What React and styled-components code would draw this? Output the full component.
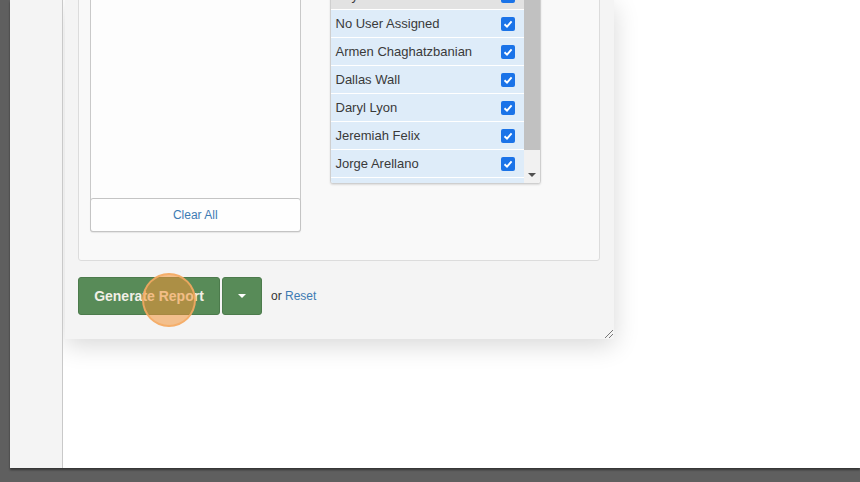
import React from "react";
import styled, { createGlobalStyle } from "styled-components";

const GlobalStyle = createGlobalStyle`
  html, body {
    margin: 0;
    padding: 0;
    background: #5f5f5f;
    font-family: "Liberation Sans", Arial, sans-serif;
  }
  * { box-sizing: border-box; }
`;

const Screen = styled.div`
  width: 860px;
  height: 482px;
  overflow: hidden;
  background: #5f5f5f;
  padding: 0 0 14px 10px;
`;

const Page = styled.div`
  height: 468px;
  display: flex;
  background: #fff;
  box-shadow: 0 2px 2px rgba(0, 0, 0, 0.45);
`;

const Sidebar = styled.aside`
  width: 53px;
  flex-shrink: 0;
  background: #f4f4f4;
  border-right: 1px solid #c9c9c9;
`;

const Main = styled.main`
  flex: 1;
  padding-left: 2px;
  overflow: hidden;
`;

const Dialog = styled.section`
  position: relative;
  width: 549px;
  height: 339px;
  background: #f4f4f4;
  box-shadow: 0 6px 24px rgba(0, 0, 0, 0.16);
  padding: 0 14px 0 13px;
  display: flex;
  flex-direction: column;
`;

const Fieldset = styled.div`
  margin-top: -30px;
  height: 291px;
  border: 1px solid #dcdcdc;
  border-radius: 3px;
  background: #f9f9f9;
  padding: 9px 58px 0 11px;
  display: flex;
  align-items: flex-start;
  gap: 29px;
`;

const LeftList = styled.div`
  width: 211px;
  height: 252px;
  border: 1px solid #c9c9c9;
  border-radius: 3px;
  background: #fdfdfd;
  display: flex;
  flex-direction: column;
  justify-content: flex-end;
`;

const ClearButton = styled.button`
  margin: 0 -1px -1px;
  height: 34px;
  border: 1px solid #c4c4c4;
  border-radius: 3px;
  background: #fefefe;
  box-shadow: 0 1px 1px rgba(0, 0, 0, 0.08);
  color: #3d7bb3;
  font-family: inherit;
  font-size: 12px;
`;

const RightList = styled.div`
  margin-top: 1px;
  width: 212px;
  height: 203px;
  border: 1px solid #cfcfcf;
  border-radius: 3px;
  background: #fff;
  box-shadow: 0 1px 2px rgba(0, 0, 0, 0.12);
  display: flex;
  overflow: hidden;
`;

const Rows = styled.ul`
  flex: 1;
  margin: 0;
  padding: 0;
  list-style: none;
`;

const Row = styled.li`
  height: 28px;
  border-bottom: 1px solid #fff;
  background: ${(p) => (p.hover ? "#e2e2e2" : "#deecf9")};
  display: flex;
  align-items: center;
  justify-content: space-between;
  padding: 0 9px 0 5px;
  font-size: 13px;
  color: #3a3a3a;
`;

const Check = styled.span`
  width: 14px;
  height: 14px;
  border-radius: 2px;
  background: #1a73e8;
  display: flex;
  align-items: center;
  justify-content: center;
`;

const Scrollbar = styled.div`
  width: 16px;
  background: #f1f1f1;
  display: flex;
  flex-direction: column;
`;

const Thumb = styled.div`
  height: 168px;
  background: #c1c1c1;
`;

const ArrowDown = styled.div`
  margin: auto auto 6px;
  width: 0;
  height: 0;
  border-left: 4px solid transparent;
  border-right: 4px solid transparent;
  border-top: 4px solid #505050;
`;

const Actions = styled.div`
  margin-top: 16px;
  display: flex;
  align-items: center;
`;

const PrimaryButton = styled.button`
  height: 38px;
  width: ${(p) => p.w}px;
  margin-right: ${(p) => p.mr || 0}px;
  border: 1px solid #4c7b4c;
  border-radius: 3px;
  background: #588b58;
  color: #f2efe6;
  font-family: inherit;
  font-size: 14px;
  font-weight: bold;
  display: flex;
  align-items: center;
  justify-content: center;
  padding: 0;
`;

const Caret = styled.span`
  width: 0;
  height: 0;
  border-left: 4px solid transparent;
  border-right: 4px solid transparent;
  border-top: 4px solid #fff;
`;

const Or = styled.span`
  margin-left: 9px;
  font-size: 12px;
  color: #333;
`;

const Link = styled.a`
  color: #3d7bb3;
  text-decoration: none;
`;

const Grip = styled.svg`
  position: absolute;
  right: 0;
  bottom: 0;
`;

const Highlight = styled.div`
  position: absolute;
  left: 77px;
  top: 273px;
  width: 54px;
  height: 54px;
  border-radius: 50%;
  background: rgba(242, 148, 55, 0.55);
  border: 2px solid rgba(245, 170, 100, 0.85);
  pointer-events: none;
`;

const users = [
  "No User Assigned",
  "Armen Chaghatzbanian",
  "Dallas Wall",
  "Daryl Lyon",
  "Jeremiah Felix",
  "Jorge Arellano",
  "Jose Garcia",
];

const CheckMark = () => (
  <Check>
    <svg width="10" height="10" viewBox="0 0 10 10">
      <path d="M1.5 5.2 L4 7.6 L8.6 2.4" fill="none" stroke="#fff" strokeWidth="1.9" />
    </svg>
  </Check>
);

export default function App() {
  return (
    <>
      <GlobalStyle />
      <Screen>
        <Page>
          <Sidebar />
          <Main>
            <Dialog>
              <Fieldset>
                <LeftList>
                  <ClearButton>Clear All</ClearButton>
                </LeftList>
                <RightList>
                  <Rows>
                    <Row hover>
                      <span>Any User</span>
                      <CheckMark />
                    </Row>
                    {users.map((u) => (
                      <Row key={u}>
                        <span>{u}</span>
                        <CheckMark />
                      </Row>
                    ))}
                  </Rows>
                  <Scrollbar>
                    <Thumb />
                    <ArrowDown />
                  </Scrollbar>
                </RightList>
              </Fieldset>
              <Actions>
                <PrimaryButton w={142} mr={2}>Generate Report</PrimaryButton>
                <PrimaryButton w={40}>
                  <Caret />
                </PrimaryButton>
                <Or>
                  or <Link href="#">Reset</Link>
                </Or>
              </Actions>
              <Grip width="12" height="12" viewBox="0 0 12 12">
                <path d="M3 11 L11 3 M7 11 L11 7" stroke="#777" strokeWidth="1" />
              </Grip>
              <Highlight />
            </Dialog>
          </Main>
        </Page>
      </Screen>
    </>
  );
}
